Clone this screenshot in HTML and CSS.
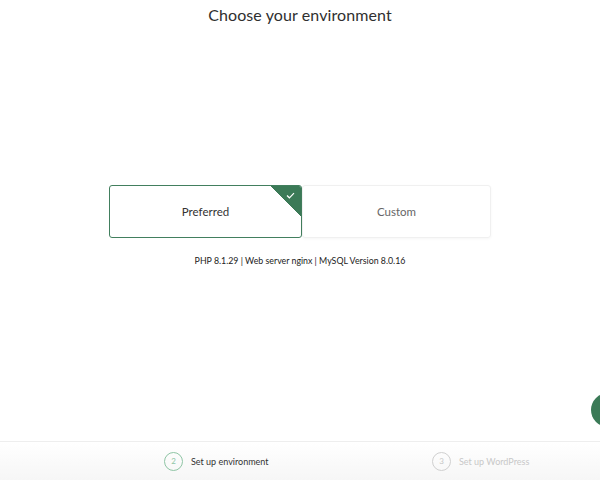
FILE: index.html
```html
<!DOCTYPE html>
<html lang="en">
<head>
    <meta charset="UTF-8">
    <title>Choose your environment</title>
    <link rel="stylesheet" href="styles.css">
</head>
<body>

    <div class="page">
        <h2 class="title">Choose your environment</h2>

        <div class="choices">
            <div class="choice selected">
                Preferred
                <span class="corner">
                    <svg width="9" height="7" viewBox="0 0 9 7"><path d="M1 3.5 L3.4 5.8 L8 1.2" fill="none" stroke="#fff" stroke-width="1.2"/></svg>
                </span>
            </div>
            <div class="choice">Custom</div>
        </div>

        <p class="details">PHP 8.1.29 | Web server nginx | MySQL Version 8.0.16</p>
    </div>

    <span class="help-dot"></span>

    <div class="steps">
        <div class="step done"><span class="num">1</span>Set up site</div>
        <div class="step active"><span class="num">2</span>Set up environment</div>
        <div class="step todo"><span class="num">3</span>Set up WordPress</div>
    </div>

</body>
</html>
```

FILE: styles.css
```css
body {
    font-family: Lato, "Open Sans", sans-serif;
    background: white;
    color: #333;
    margin: 0;
    padding: 0;
    height: 480px;
    overflow: hidden;
}

.page {
    text-align: center;
}

.title {
    font-size: 16px;
    font-weight: normal;
    margin: 0;
    padding-top: 5px;
    color: #2f2f2f;
    letter-spacing: 0.1px;
}

.choices {
    display: flex;
    justify-content: center;
    margin-top: 161px;
}

.choice {
    position: relative;
    width: 187px;
    height: 51px;
    display: flex;
    align-items: center;
    justify-content: center;
    font-size: 11.5px;
    color: #666;
    border: 1px solid #f0f0f0;
    border-radius: 3px;
    box-shadow: 0px 1px 3px rgba(0, 0, 0, 0.04);
    overflow: hidden;
}

.choice.selected {
    width: 191px;
    border: 1.5px solid #427f5e;
    color: #333;
    box-shadow: none;
}

.corner {
    position: absolute;
    top: 0;
    right: 0;
    width: 30px;
    height: 30px;
    background: linear-gradient(to top right, transparent 50%, #3b7a57 50%);
}

.corner svg {
    position: absolute;
    top: 6px;
    right: 6px;
}

.details {
    font-size: 8.8px;
    color: #222;
    margin: 17px 0 0;
}

.help-dot {
    position: fixed;
    left: 591px;
    top: 393px;
    width: 34px;
    height: 34px;
    border-radius: 50%;
    background: #3b7a57;
}

.steps {
    position: fixed;
    left: 0;
    right: 0;
    bottom: 0;
    height: 38px;
    display: flex;
    align-items: center;
    border-top: 1px solid #eee;
    background: linear-gradient(#fff, #f6f6f6);
    margin-left: -104px;
}

.step {
    flex: 0 0 268px;
    display: flex;
    align-items: center;
    gap: 8px;
    font-size: 9px;
    color: #333;
}

.num {
    width: 17px;
    height: 17px;
    border-radius: 50%;
    border: 1.5px solid #8fc5a5;
    color: #8fc5a5;
    font-size: 8px;
    display: flex;
    align-items: center;
    justify-content: center;
}

.step.done .num {
    border-color: #ccc;
    color: #999;
}

.step.todo {
    color: #c8c8c8;
}

.step.todo .num {
    border-color: #d0d0d0;
    color: #c8c8c8;
}
```
